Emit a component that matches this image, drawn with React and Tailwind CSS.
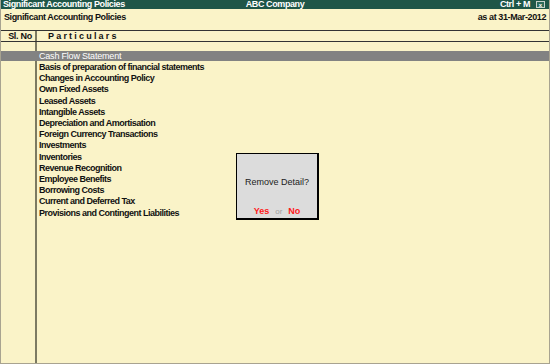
import React from "react";

const items = [
  "Basis of preparation of financial statements",
  "Changes in Accounting Policy",
  "Own Fixed Assets",
  "Leased Assets",
  "Intangible Assets",
  "Depreciation and Amortisation",
  "Foreign Currency Transactions",
  "Investments",
  "Inventories",
  "Revenue Recognition",
  "Employee Benefits",
  "Borrowing Costs",
  "Current and Deferred Tax",
  "Provisions and Contingent Liabilities",
];

export default function App() {
  return (
    <div
      className="relative w-[550px] h-[364px] bg-[#faf3c8] overflow-hidden flex flex-col border-l border-r border-b border-[#a8a390]"
      style={{ fontFamily: '"Liberation Sans", Arial, sans-serif' }}
    >
      {/* title bar */}
      <div className="h-[9px] bg-[#1f5648] grid grid-cols-3 items-center px-[2px] text-white font-bold text-[9px] leading-none tracking-[-0.4px]">
        <div>Significant Accounting Policies</div>
        <div className="text-center">ABC Company</div>
        <div className="flex items-center justify-end gap-[6px] pr-[2px]">
          <span>Ctrl + M</span>
          <span className="w-[9px] h-[7px] border border-[#c8d0cc] bg-[#2d6a5a] text-[6px] flex items-center justify-center leading-none tracking-normal">x</span>
        </div>
      </div>
      {/* header */}
      <div className="h-[21px] flex items-start justify-between px-[3px] pt-[4px] text-[9px] font-bold text-[#111] leading-none tracking-[-0.4px]">
        <span>Significant Accounting Policies</span>
        <span>as at 31-Mar-2012</span>
      </div>
      {/* table */}
      <div className="flex-1 flex flex-col border-t border-[#333]">
        <div className="h-[11px] flex items-center border-b border-[#333] text-[9px] font-bold text-[#111] leading-none">
          <div className="w-[34px] h-full flex items-center justify-center pl-[4px] tracking-[-0.3px]">Sl. No</div>
          <div className="w-[2px] h-full bg-[#7c7a62]" />
          <div className="pl-[11px] tracking-[2.2px]">Particulars</div>
        </div>
        <div className="flex-1 flex">
          <div className="w-[34px]" />
          <div className="w-[2px] bg-[#7c7a62]" />
          <div className="flex-1" />
        </div>
      </div>
      {/* rows */}
      <div className="absolute left-0 right-0 top-[42px] flex flex-col text-[9px] font-bold text-[#111] leading-none tracking-[-0.5px]">
        <div className="h-[9px]" />
        <div className="h-[10px] bg-[#828282] flex items-center text-white">
          <div className="w-[36px]" />
          <span className="pl-[2px] font-normal tracking-[-0.2px]">Cash Flow Statement</span>
        </div>
        <div className="h-[1px]" />
        {items.map((t) => (
          <div key={t} className="h-[11.2px] flex items-center">
            <div className="w-[36px]" />
            <span className="pl-[2px]">{t}</span>
          </div>
        ))}
      </div>
      {/* dialog */}
      <div className="absolute left-[235px] top-[153px] w-[83px] h-[67px] bg-[#dcdcdc] border border-black border-r-2 border-b-2 flex flex-col items-center text-[9px] leading-none">
        <div className="mt-[24px] text-[#222]">Remove Detail?</div>
        <div className="mt-auto mb-[2px] flex items-baseline gap-[6px]">
          <span className="font-bold text-[#ff1a1a]">Yes</span>
          <span className="text-[#a0a0a0] text-[8px]">or</span>
          <span className="font-bold text-[#ff1a1a]">No</span>
        </div>
      </div>
    </div>
  );
}
